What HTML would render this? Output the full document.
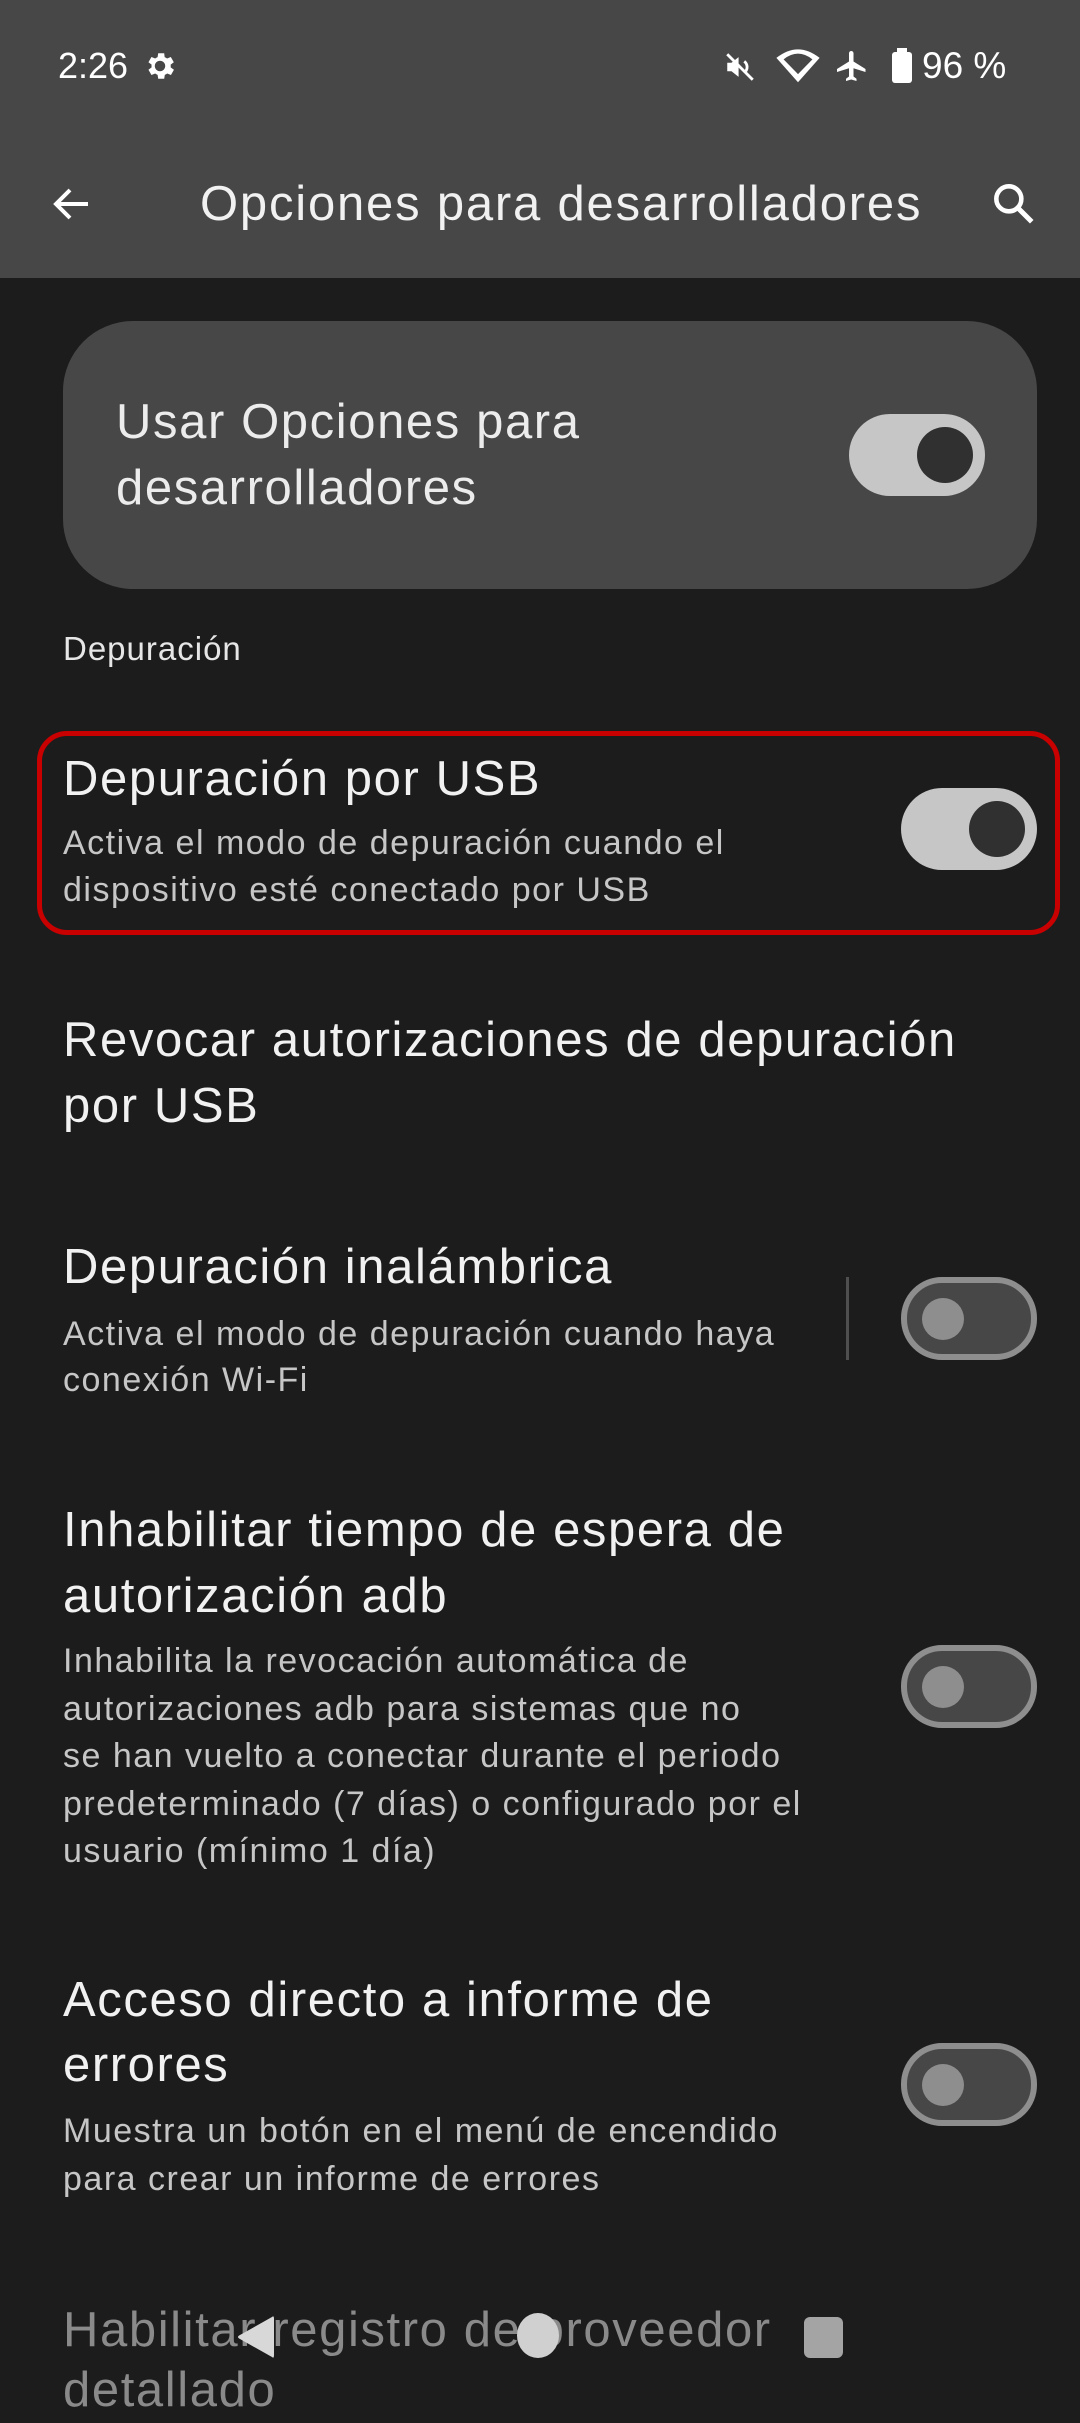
<!DOCTYPE html>
<html><head><meta charset="utf-8"><style>
body{margin:0;width:1080px;height:2400px;background:#1c1c1c;overflow:hidden;position:relative;font-family:"Liberation Sans",sans-serif}
.a{position:absolute;white-space:nowrap}
.h{font-size:49px;color:#f1f1f1;line-height:66px;left:63px;letter-spacing:1.6px}
.s{font-size:34px;color:#c6c6c6;line-height:48px;left:63px;letter-spacing:1.5px}
.on{position:absolute;width:136px;height:82px;border-radius:41px;background:#c6c6c6}
.on::after{content:"";position:absolute;right:12px;top:13px;width:56px;height:56px;border-radius:50%;background:#303030}
.off{position:absolute;left:901px;width:124px;height:71px;border-radius:41px;background:#474747;border:6px solid #8e8e8e}
.off::after{content:"";position:absolute;left:15px;top:15px;width:42px;height:42px;border-radius:50%;background:#8e8e8e}
</style></head><body>
<div class="a" style="left:0;top:0;width:1080px;height:278px;background:#474747"></div>
<div class="a" style="left:58px;top:44px;font-size:36px;color:#fff;line-height:44px">2:26</div>
<svg class="a" style="left:142px;top:48px" width="36" height="36" viewBox="0 0 24 24"><path fill="#fff" d="M19.1 12.9a7 7 0 0 0 0-1.8l2.1-1.6-2-3.5-2.5 1a7 7 0 0 0-1.6-.9L14.8 3.5h-4l-.4 2.6a7 7 0 0 0-1.6.9l-2.5-1-2 3.5 2.1 1.6a7 7 0 0 0 0 1.8l-2.1 1.6 2 3.5 2.5-1a7 7 0 0 0 1.6.9l.4 2.6h4l.4-2.6a7 7 0 0 0 1.6-.9l2.5 1 2-3.5zM12 15.5a3.5 3.5 0 1 1 0-7 3.5 3.5 0 0 1 0 7z"/></svg>
<svg class="a" style="left:723px;top:50px" width="34" height="34" viewBox="0 0 24 24"><path fill="#fff" d="M3 9h3l5-4v14l-5-4H3z"/><path stroke="#fff" stroke-width="2" fill="none" d="M15 8a5 5 0 0 1 0 8M3 3l18 18"/></svg>
<svg class="a" style="left:776px;top:48px" width="44" height="36" viewBox="0 0 24 20"><path fill="#fff" d="M12 19L0 5.5Q12-4 24 5.5z"/><path fill="#474747" d="M12 14.5L4 6.3Q12 0 20 6.3z"/></svg>
<svg class="a" style="left:834px;top:48px" width="36" height="36" viewBox="0 0 24 24"><path fill="#fff" d="M21 16v-2l-8-5V3.5a1.5 1.5 0 0 0-3 0V9l-8 5v2l8-2.5V19l-2 1.5V22l3.5-1 3.5 1v-1.5L13 19v-5.5z"/></svg>
<div class="a" style="left:892px;top:52px;width:20px;height:31px;background:#fff;border-radius:3px"></div>
<div class="a" style="left:897px;top:48px;width:10px;height:5px;background:#fff"></div>
<div class="a" style="left:922px;top:44px;font-size:37px;color:#fff;line-height:44px">96 %</div>
<svg class="a" style="left:48px;top:180px" width="48" height="48" viewBox="0 0 24 24"><path fill="none" stroke="#fff" stroke-width="2" d="M20 12H5M11 5l-7 7 7 7"/></svg>
<div class="a" style="left:200px;top:174px;font-size:49px;color:#f1f1f1;line-height:60px;letter-spacing:1.8px">Opciones para desarrolladores</div>
<svg class="a" style="left:988px;top:178px" width="50" height="50" viewBox="0 0 24 24"><circle cx="10" cy="10" r="6" fill="none" stroke="#fff" stroke-width="2.2"/><path stroke="#fff" stroke-width="2.4" d="M14.5 14.5L21 21"/></svg>

<div class="a" style="left:63px;top:321px;width:974px;height:268px;border-radius:70px;background:#474747"></div>
<div class="a h" style="left:116px;top:389px;color:#ececec">Usar Opciones para</div>
<div class="a h" style="left:116px;top:455px;color:#ececec">desarrolladores</div>
<div class="on" style="left:849px;top:414px"></div>
<div class="a" style="left:63px;top:627px;font-size:33px;color:#e6e6e6;line-height:44px;letter-spacing:1px">Depuración</div>

<div class="a" style="left:37px;top:731px;width:1013px;height:194px;border:5px solid #c80000;border-radius:30px"></div>
<div class="a h" style="top:746px">Depuración por USB</div>
<div class="a s" style="top:819px">Activa el modo de depuración cuando el</div>
<div class="a s" style="top:866px">dispositivo esté conectado por USB</div>
<div class="on" style="left:901px;top:788px"></div>

<div class="a h" style="top:1007px">Revocar autorizaciones de depuración</div>
<div class="a h" style="top:1073px">por USB</div>

<div class="a h" style="top:1234px">Depuración inalámbrica</div>
<div class="a s" style="top:1310px">Activa el modo de depuración cuando haya</div>
<div class="a s" style="top:1356px">conexión Wi-Fi</div>
<div class="a" style="left:846px;top:1277px;width:3px;height:83px;background:#4f4f4f"></div>
<div class="off" style="top:1277px"></div>

<div class="a h" style="top:1497px">Inhabilitar tiempo de espera de</div>
<div class="a h" style="top:1563px">autorización adb</div>
<div class="a s" style="top:1637px">Inhabilita la revocación automática de</div>
<div class="a s" style="top:1685px">autorizaciones adb para sistemas que no</div>
<div class="a s" style="top:1732px">se han vuelto a conectar durante el periodo</div>
<div class="a s" style="top:1780px">predeterminado (7 días) o configurado por el</div>
<div class="a s" style="top:1827px">usuario (mínimo 1 día)</div>
<div class="off" style="top:1645px"></div>

<div class="a h" style="top:1967px">Acceso directo a informe de</div>
<div class="a h" style="top:2032px">errores</div>
<div class="a s" style="top:2107px">Muestra un botón en el menú de encendido</div>
<div class="a s" style="top:2155px">para crear un informe de errores</div>
<div class="off" style="top:2043px"></div>

<div class="a h" style="top:2297px;color:#8a8a8a">Habilitar registro de proveedor</div>
<div class="a h" style="top:2357px;color:#8a8a8a">detallado</div>
<svg class="a" style="left:234px;top:2313px" width="44" height="48" viewBox="0 0 22 24"><path fill="#d8d8d8" d="M19 2Q20 1 20 3V21Q20 23 19 22L3 13Q1 12 3 11z"/></svg>
<div class="a" style="left:517px;top:2313px;width:42px;height:45px;border-radius:50%;background:#d0d0d0"></div>
<div class="a" style="left:804px;top:2317px;width:39px;height:41px;border-radius:6px;background:#a4a4a4"></div>
</body></html>
